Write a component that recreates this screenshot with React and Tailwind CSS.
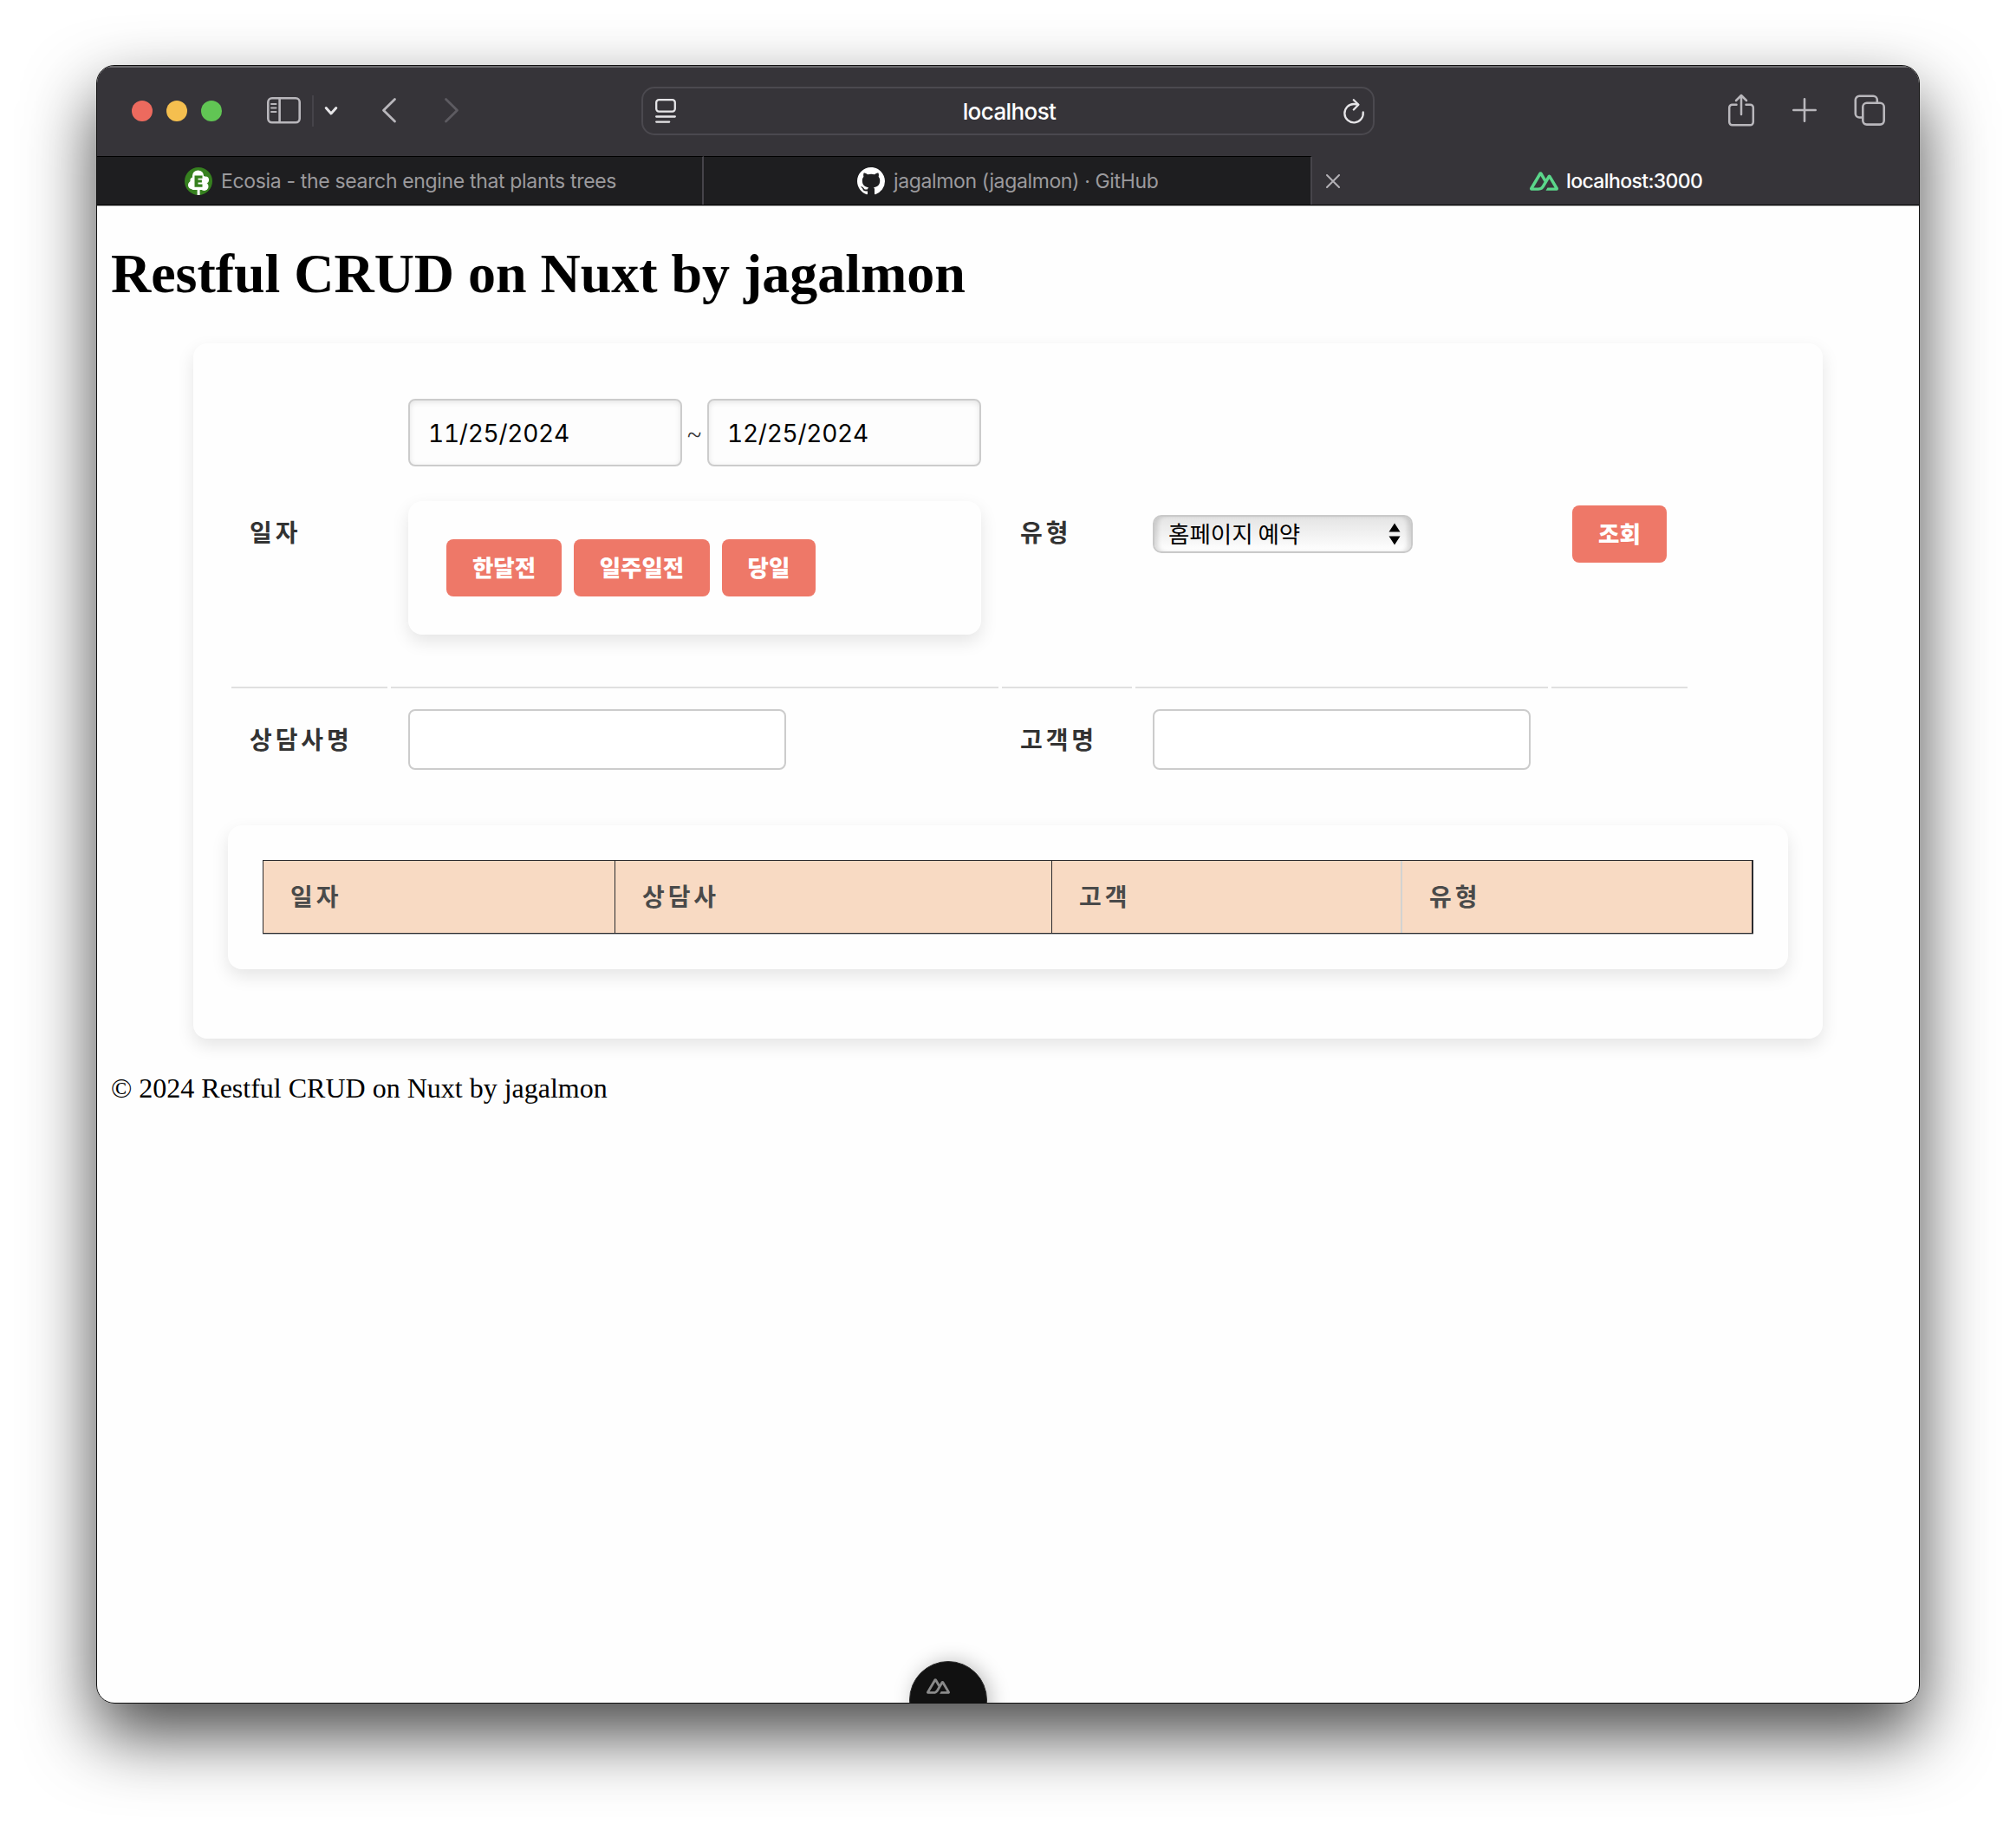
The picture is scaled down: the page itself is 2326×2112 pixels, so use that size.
import React from "react";

const ui = "font-['Inter','Noto_Sans_CJK_KR',sans-serif]";
const ko = "font-['Noto_Sans_CJK_KR',sans-serif]";

function NuxtLogo({ className }) {
  return (
    <svg viewBox="0 4 24 16" fill="currentColor" className={className}>
      <path d="M13.4642 19.8295h8.9218c.2834 0 .5618-.0723.8072-.2098a1.5899 1.5899 0 0 0 .5908-.5732 1.5293 1.5293 0 0 0 .216-.783 1.529 1.529 0 0 0-.2167-.7828L17.7916 7.4142a1.59 1.59 0 0 0-.5907-.573 1.6524 1.6524 0 0 0-.807-.2099c-.2833 0-.5616.0724-.807.2098a1.59 1.59 0 0 0-.5907.5731L13.4642 9.99l-2.9954-5.0366a1.5913 1.5913 0 0 0-.591-.573 1.6533 1.6533 0 0 0-.8071-.2098c-.2834 0-.5617.0723-.8072.2097a1.5913 1.5913 0 0 0-.591.573L.2168 17.4808A1.5292 1.5292 0 0 0 0 18.2635c-.0001.2749.0744.545.216.783a1.59 1.59 0 0 0 .5908.5732c.2454.1375.5238.2098.8072.2098h5.6003c2.2197 0 3.8564-.9451 4.983-2.789l2.7338-4.5819 1.4641-2.4547 4.3963 7.3674h-5.8604Zm-6.341-2.4547-3.9087-.0008 5.8585-9.8202 2.9225 4.9101-1.9571 3.2823c-.7476 1.2055-1.5971 1.6286-2.9155 1.6286z" />
    </svg>
  );
}

function GithubLogo() {
  return (
    <svg viewBox="0 0 16 16" fill="currentColor" className="size-8 shrink-0 text-white">
      <path d="M8 0C3.58 0 0 3.58 0 8c0 3.54 2.29 6.53 5.47 7.59.4.07.55-.17.55-.38 0-.19-.01-.82-.01-1.49-2.01.37-2.53-.49-2.69-.94-.09-.23-.48-.94-.82-1.13-.28-.15-.68-.52-.01-.53.63-.01 1.08.58 1.23.82.72 1.21 1.87.87 2.33.66.07-.52.28-.87.51-1.07-1.78-.2-3.64-.89-3.64-3.95 0-.87.31-1.59.82-2.15-.08-.2-.36-1.02.08-2.12 0 0 .67-.21 2.2.82.64-.18 1.32-.27 2-.27.68 0 1.36.09 2 .27 1.53-1.04 2.2-.82 2.2-.82.44 1.1.16 1.92.08 2.12.51.56.82 1.27.82 2.15 0 3.07-1.87 3.75-3.65 3.95.29.25.54.73.54 1.48 0 1.07-.01 1.93-.01 2.2 0 .21.15.46.55.38A8.013 8.013 0 0 0 16 8c0-4.42-3.58-8-8-8z" />
    </svg>
  );
}

function EcosiaLogo() {
  return (
    <svg viewBox="0 0 32 32" className="size-8 shrink-0">
      <circle cx="16" cy="16" r="16" fill="#36801f" />
      <g fill="#fff">
        <circle cx="15.500" cy="10" r="6.600" />
        <circle cx="9" cy="20.500" r="5" />
        <circle cx="10" cy="15" r="3.600" />
        <circle cx="22.500" cy="22" r="5" />
        <circle cx="24" cy="14.600" r="4" />
        <rect x="9" y="10" width="14" height="16" />
        <path d="M14.600 25h3v7h-3z" />
      </g>
      <path d="M11.500 9.500h9v3.200h-5v1.700h4.400v3.100h-4.400v2.100h5v3.200h-9z" fill="#36801f" />
    </svg>
  );
}

function Toolbar() {
  return (
    <div className="flex h-[104px] w-full items-center">
      <div className="ml-10 flex gap-4">
        <span className="size-6 rounded-full bg-[#ed6a5e]" />
        <span className="size-6 rounded-full bg-[#f5bf4f]" />
        <span className="size-6 rounded-full bg-[#61c554]" />
      </div>
      <svg viewBox="0 0 40 32" className="mb-0.5 ml-[51px] h-8 w-10" fill="none" stroke="#b9b7bc" strokeWidth="2.600">
        <rect x="2.300" y="2.300" width="36.400" height="28" rx="4.500" />
        <path d="M15.600 2v29" />
        <path d="M6 9h5.500M6 13.500h5.500M6 18h5.500" strokeWidth="2" strokeLinecap="round" />
      </svg>
      <span className="ml-[13px] h-9 w-0.5 bg-[#46444a]" />
      <svg viewBox="0 0 16 12" className="ml-[12px] h-3 w-4" fill="none" stroke="#e6e5e8" strokeWidth="3" strokeLinecap="round" strokeLinejoin="round">
        <path d="M2.200 2.500l5.800 6.400 5.800-6.400" />
      </svg>
      <svg viewBox="0 0 18 32" className="ml-[50px] h-8 w-[18px]" fill="none" stroke="#b9b7bc" strokeWidth="2.800" strokeLinecap="round" strokeLinejoin="round">
        <path d="M15.500 2.500L2.500 15.200l13 12.800" />
      </svg>
      <svg viewBox="0 0 18 32" className="ml-[54px] h-8 w-[18px]" fill="none" stroke="#5d5b61" strokeWidth="2.800" strokeLinecap="round" strokeLinejoin="round">
        <path d="M2.500 2.500l13 12.700-13 12.800" />
      </svg>
      <div className="ml-[210px] flex h-14 w-[846px] items-center justify-between rounded-[15px] border-2 border-[#4b494f] pr-[9px] pl-[14px]">
        <svg viewBox="0 0 24 28" className="h-7 w-6" fill="none" stroke="#e6e5e8" strokeWidth="2.300" strokeLinecap="round">
          <rect x="1.200" y="1.200" width="21.600" height="13.400" rx="3" />
          <path d="M1.200 20.500h21.600M1.200 26.600h15" />
        </svg>
        <span className="pt-px text-[26px] leading-8 font-medium tracking-[-0.6px] text-white">localhost</span>
        <svg viewBox="0 0 26 30" className="h-[30px] w-[26px]" fill="none" stroke="#e6e5e8" strokeWidth="2.300" strokeLinecap="round" strokeLinejoin="round">
          <path d="M23.700 16.500a10.700 10.700 0 1 1-10.700-9.500c2 0 3.600.300 5 .8" />
          <path d="M12.800 2.200l5.600 5.500-5.600 5.800" />
        </svg>
      </div>
      <svg viewBox="0 0 32 38" className="mb-0.5 ml-[407px] h-[38px] w-8" fill="none" stroke="#b9b7bc" strokeWidth="2.500" strokeLinecap="round" strokeLinejoin="round">
        <path d="M10.500 12.700H5.700a3.500 3.500 0 0 0-3.500 3.500v16.600a3.500 3.500 0 0 0 3.500 3.500h20.600a3.500 3.500 0 0 0 3.500-3.500V16.200a3.500 3.500 0 0 0-3.500-3.500h-4.800" />
        <path d="M16 24V2.500M10 8l6-6 6 6" />
      </svg>
      <svg viewBox="0 0 28 28" className="mb-0.5 ml-[43px] size-7" fill="none" stroke="#b9b7bc" strokeWidth="2.600" strokeLinecap="round">
        <path d="M14 1.300v25.400M1.300 14h25.400" />
      </svg>
      <svg viewBox="0 0 36 36" className="mb-0.5 ml-[43px] size-9" fill="none" stroke="#b9b7bc" strokeWidth="2.600" strokeLinejoin="round">
        <rect x="10.300" y="9.800" width="24.400" height="24.800" rx="4.500" />
        <path d="M10.300 26.500H6.300a4.500 4.500 0 0 1-4.500-4.500V6.300a4.500 4.500 0 0 1 4.500-4.500h16a4.500 4.500 0 0 1 4.500 4.500v3.500" />
      </svg>
    </div>
  );
}

function TabBar() {
  return (
    <div className="flex h-[57px] border-b border-black text-[23px] leading-7 text-[#9b9a9d]">
      <div className="flex w-[700px] items-center gap-[10px] border-t border-r-2 border-t-black border-r-[#46444a] bg-[#1e1e20] pl-[101px]">
        <EcosiaLogo />
        <span className="whitespace-nowrap tracking-[-0.34px]">Ecosia - the search engine that plants trees</span>
      </div>
      <div className="flex w-[702px] items-center gap-[10px] border-t border-r-2 border-t-black border-r-[#46444a] bg-[#1e1e20] pl-[177px]">
        <GithubLogo />
        <span className="whitespace-nowrap tracking-[-0.37px]">jagalmon (jagalmon) · GitHub</span>
      </div>
      <div className="flex flex-1 items-center pt-px">
        <svg viewBox="0 0 16 16" className="ml-[16px] size-4" fill="none" stroke="#b3b1b6" strokeWidth="2" strokeLinecap="round">
          <path d="M1 1l14 14M15 1L1 15" />
        </svg>
        <NuxtLogo className="ml-[219px] h-[22px] w-[33px] text-[#5bd68a]" />
        <span className="ml-[9px] whitespace-nowrap font-medium tracking-[-0.62px] text-white">localhost:3000</span>
      </div>
    </div>
  );
}

function Label({ children }) {
  return <span className={`${ko} pb-[3px] text-[28px] leading-8 font-bold tracking-[3.900px] text-[#333]`}>{children}</span>;
}

function Action({ children, className }) {
  return (
    <button className={`${ko} ${className} h-[66px] shrink-0 rounded-lg bg-[#ee7868] pb-0.5 text-center text-[26.500px] leading-none font-extrabold whitespace-nowrap text-white`}>
      {children}
    </button>
  );
}

function DateBox({ children }) {
  return (
    <div className="flex h-[78px] w-[316px] items-center rounded-lg border-2 border-[#ccc] bg-[#fdfdfd] px-[21px] pt-0.5 text-[28px] leading-8 tracking-[-0.25px] text-black tabular-nums shadow-[inset_0_2px_6px_rgba(0,0,0,0.1)]">
      {children}
    </div>
  );
}

const panel = "rounded-[16px] bg-[#fefefe] shadow-[0_8px_20px_rgba(0,0,0,0.1)]";
const line = "border-b-2 border-[#e0e0e0]";

function Filters() {
  return (
    <div className="ml-1 grid grid-cols-[180px_701px_150px_476px_157px] grid-rows-[358px_110px] gap-x-1 gap-y-1">
      <div className={`${line} flex items-center pl-[21px]`}><Label>일자</Label></div>
      <div className={`${line} pt-6 pl-5`}>
        <div className={`${ui} flex w-[661px] items-center justify-between`}>
          <DateBox>11/25/2024</DateBox>
          <span className="pt-1.5 pr-px font-['Liberation_Serif',serif] text-[30px] leading-8 text-[#333]">~</span>
          <DateBox>12/25/2024</DateBox>
        </div>
        <div className={`${panel} mt-10 flex h-[154px] w-[661px] items-center gap-[14px] pl-11`}>
          <Action className="w-[133px]">한달전</Action>
          <Action className="w-[157px]">일주일전</Action>
          <Action className="w-[108px]">당일</Action>
        </div>
      </div>
      <div className={`${line} flex items-center pl-[21px]`}><Label>유형</Label></div>
      <div className={`${line} flex items-center pt-1 pl-5`}>
        <div className={`${ko} flex h-11 w-[300px] items-center justify-between rounded-[10px] border-2 border-[#c9c9c9] bg-gradient-to-b from-[#e4e4e4] to-white pr-3 pl-4 text-[26.500px] leading-8 text-black shadow-[inset_6px_0_5px_-2px_rgba(0,0,0,0.13),inset_-6px_0_5px_-2px_rgba(0,0,0,0.13)]`}>
          <span className="pb-0.5">홈페이지 예약</span>
          <svg viewBox="0 0 14 26" className="h-[26px] w-[14px]" fill="#000">
            <path d="M7 .500L13.500 10.500H.500zM7 25.500L.500 15.500h13z" />
          </svg>
        </div>
      </div>
      <div className={`${line} flex items-center pt-1 pl-6`}><Action className="w-[109px]">조회</Action></div>

      <div className="flex items-center pl-[21px]"><Label>상담사명</Label></div>
      <div className="flex items-center pl-5">
        <div className="h-[70px] w-[436px] rounded-lg border-2 border-[#ccc] bg-white" />
      </div>
      <div className="flex items-center pl-[21px]"><Label>고객명</Label></div>
      <div className="flex items-center pl-5">
        <div className="h-[70px] w-[436px] rounded-lg border-2 border-[#ccc] bg-white" />
      </div>
      <div />
    </div>
  );
}

function ResultTable() {
  const th = `${ko} flex items-center pb-1 pl-[31px] text-[28px] leading-8 font-bold tracking-[3.900px] text-[#4a4a4a]`;
  return (
    <div className={`${panel} mt-11 px-10 py-10`}>
      <div className="border-b border-[#b9babb]">
        <div className="grid h-[85px] grid-cols-[406px_504px_404px_1fr] border border-r-2 border-[#2b2b2e] bg-[#f8dac3]">
          <div className={`${th} border-r border-[#2b2b2e]`}>일자</div>
          <div className={`${th} border-r border-[#2b2b2e]`}>상담사</div>
          <div className={`${th} border-r-2 border-[#d3d3d1]`}>고객</div>
          <div className={th}>유형</div>
        </div>
      </div>
    </div>
  );
}

export default function App() {
  return (
    <div className="h-[2112px] w-[2326px] overflow-hidden bg-white pt-[75px] pl-[111px]">
      <div className="h-[1890px] w-[2104px] rounded-[21px] bg-white shadow-[0_36px_80px_rgba(0,0,0,0.72)]">
        <div className="flex h-full w-full flex-col overflow-hidden rounded-[21px] border border-[#101010] bg-[#fefefe]">
          <header className={`${ui} flex h-[162px] shrink-0 flex-col border-b border-[#bdbdbd] bg-[#363439] shadow-[inset_0_2px_0_#6c6b6e]`}>
            <Toolbar />
            <TabBar />
          </header>
          <main className="flex flex-1 flex-col font-['Liberation_Serif',serif] text-black">
            <h1 className="mt-[41px] ml-4 text-[64px] leading-[74px] font-bold tracking-[-0.03px] whitespace-nowrap">Restful CRUD on Nuxt by jagalmon</h1>
            <section className={`${panel} mt-[43px] ml-[111px] h-[802px] w-[1880px] p-10`}>
              <Filters />
              <ResultTable />
            </section>
            <footer className="mt-[39px] ml-4 text-[32px] leading-9">© 2024 Restful CRUD on Nuxt by jagalmon</footer>
            <div className="mt-auto ml-[937px] h-[48px] w-[90px]">
              <div className="flex h-[90px] w-[90px] rounded-full border border-[#2c2c2c] bg-[#111] shadow-[4px_0_22px_rgba(0,0,0,0.25)]">
                <NuxtLogo className="mt-[19px] ml-[19px] h-[18px] w-[27px] text-[#8a8a8a]" />
              </div>
            </div>
          </main>
        </div>
      </div>
    </div>
  );
}
